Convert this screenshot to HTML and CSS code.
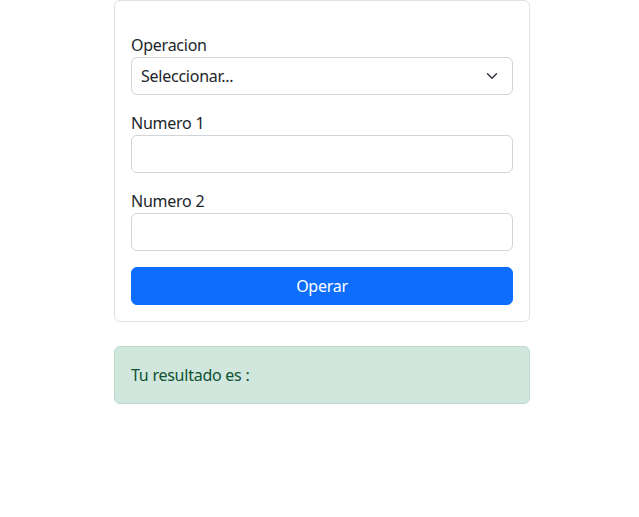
FILE: index.html
```html
<!DOCTYPE html>
<html lang="es">
<head>
<meta charset="utf-8">
<title>Calculadora</title>
<link rel="stylesheet" href="styles.css">
</head>
<body>
<main class="page">
  <section class="card">
    <form class="card-body">
      <div class="group">
        <label class="label">Operacion</label>
        <div class="select">
          <span>Seleccionar...</span>
          <svg class="chev" width="16" height="12" viewBox="0 0 16 16"><path d="m2 5 6 6 6-6" fill="none" stroke="#343a40" stroke-width="2" stroke-linecap="round" stroke-linejoin="round"/></svg>
        </div>
      </div>
      <div class="group">
        <label class="label">Numero 1</label>
        <input class="input" type="text">
      </div>
      <div class="group">
        <label class="label">Numero 2</label>
        <input class="input" type="text">
      </div>
      <button class="btn" type="button">Operar</button>
    </form>
  </section>
  <div class="alert">Tu resultado es :</div>
</main>
</body>
</html>
```
FILE: styles.css
```css
* { box-sizing: border-box; }
html, body { margin: 0; padding: 0; background: #fff; }
body {
  font-family: "Noto Sans", "Open Sans", sans-serif;
  font-size: 16px;
  line-height: 24px;
  letter-spacing: -0.25px;
  color: #212529;
}
.page {
  width: 416px;
  margin-left: 114px;
  display: flex;
  flex-direction: column;
  gap: 24px;
}
.card {
  border: 1px solid #dee2e6;
  border-radius: 6px;
  background: #fff;
}
.card-body {
  margin: 0;
  padding: 32px 16px 16px;
  display: flex;
  flex-direction: column;
  gap: 16px;
}
.group { display: flex; flex-direction: column; }
.label { display: block; height: 24px; }
.select {
  height: 38px;
  border: 1px solid #ced4da;
  border-radius: 6px;
  display: flex;
  align-items: center;
  justify-content: space-between;
  padding: 0 12px 0 9px;
}
.chev { display: block; }
.input {
  height: 38px;
  border: 1px solid #ced4da;
  border-radius: 6px;
  padding: 6px 12px;
  font: inherit;
  width: 100%;
  background: #fff;
}
.btn {
  height: 38px;
  border: 1px solid #0d6efd;
  background: #0d6efd;
  color: #fff;
  border-radius: 6px;
  font: inherit;
  letter-spacing: inherit;
  width: 100%;
}
.alert {
  background: #d1e7dd;
  border: 1px solid #badbcc;
  color: #0f5132;
  border-radius: 6px;
  padding: 16px;
}
```
